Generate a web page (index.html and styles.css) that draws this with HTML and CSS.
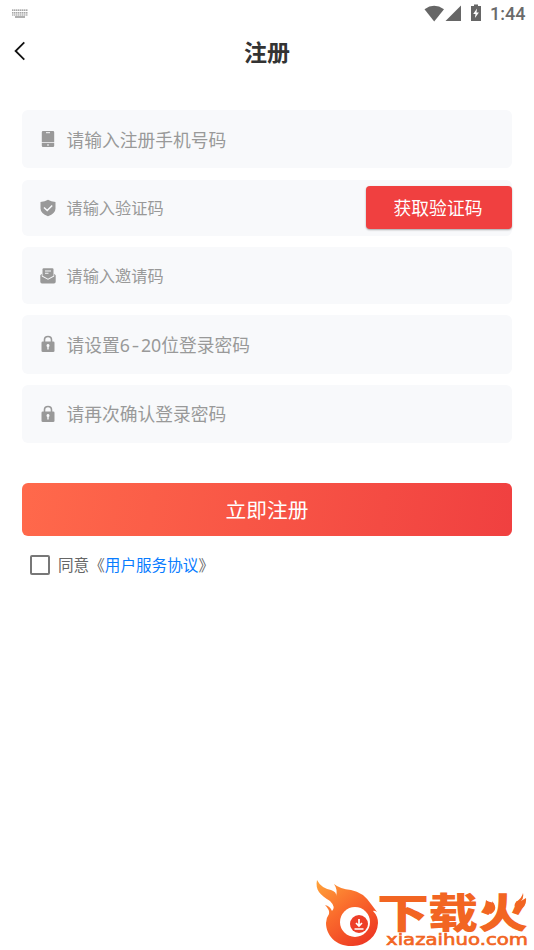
FILE: index.html
```html
<!DOCTYPE html>
<html lang="zh-CN">
<head>
<meta charset="utf-8">
<title>注册</title>
<link rel="stylesheet" href="styles.css">
</head>
<body>
<header class="status">
  <svg class="keyboard" width="16" height="10" viewBox="0 0 16 10"><path d="M0 1.200h16M0 3.800h16M0 6h16" stroke="#8b8b8b" stroke-width="1.200" stroke-dasharray="1.500 .5"/><path d="M3 8h10" stroke="#858585" stroke-width="1.300"/></svg>
  <div class="status-right">
    <svg width="61" height="18" viewBox="0 0 61 18" fill="#666"><path d="M.5 5.200Q10 -1.700 20 5.200L10.200 17.500Z"/><path d="M37 1.500V17H21.500Z"/><path d="M47 2h3V.5h4V2h3v15H47Z"/><path d="M53 4.500l-3.800 5.600h2.300l-.6 4 4-5.700h-2.400Z" fill="#fff"/></svg>
    <span class="clock">1:44</span>
  </div>
</header>
<nav class="nav">
  <svg class="back" width="12" height="20" viewBox="0 0 12 20"><path d="M10.300 1.400L1.600 10l8.700 8.600" fill="none" stroke="#111" stroke-width="1.800"/></svg>
  <h1>注册</h1>
</nav>
<main class="form">
  <div class="field tall">
    <svg class="icon" viewBox="0 0 16 18" fill="#999"><path d="M3 1h10q1.200 0 1.200 1.200v10.100H1.800V2.200Q1.800 1 3 1ZM1.800 12.900h12.400v2.900q0 1.200-1.200 1.200H3q-1.200 0-1.200-1.200Z"/><path d="M6 2.700h4M7 15h2" stroke="#f8f9fb" stroke-width="1"/></svg>
    <span class="hint large">请输入注册手机号码</span>
  </div>
  <div class="field code">
    <svg class="icon" viewBox="0 0 16 18" fill="#999"><path d="M8 .7Q11 2.800 15.500 3v6.500q0 4.800-7.500 7.800Q.5 14.300.5 9.500V3Q5 2.800 8 .7Z"/><path d="M4 8.500l3.200 3 5-5" fill="none" stroke="#f8f9fb" stroke-width="1.500"/></svg>
    <span class="hint">请输入验证码</span>
    <button class="get-code"><span>获取验证码</span></button>
  </div>
  <div class="field invite">
    <svg class="icon" viewBox="0 0 16 18" fill="#999"><path d="M3.700 1.200h8.600q1.200 0 1.200 1.200v6.400L8 11.700 2.500 8.800V2.400q0-1.200 1.200-1.200Z"/><path d="M1.800 6.800v2.700L8 12.700l6.200-3.200V6.800l1.500 1.500v6.500q0 1.700-1.700 1.700H2Q.3 16.500.3 14.800V8.300Z"/><path d="M5 4h6M5 6.300h3.500" stroke="#f8f9fb" stroke-width="1.100"/></svg>
    <span class="hint">请输入邀请码</span>
  </div>
  <div class="field password">
    <svg class="icon" viewBox="0 0 16 18"><path d="M4.500 7V4.800q0-3.300 3.500-3.300t3.500 3.300V7" fill="none" stroke="#999" stroke-width="1.600"/><rect x="1.500" y="6.500" width="13" height="10.500" rx="1.300" fill="#999"/><path d="M8 9a1.600 1.600 0 0 1 .7 3v2.500H7.300V12A1.600 1.600 0 0 1 8 9Z" fill="#f8f9fb"/></svg>
    <span class="hint large">请设置6<span class="dash">-</span>20位登录密码</span>
  </div>
  <div class="field password">
    <svg class="icon" viewBox="0 0 16 18"><path d="M4.500 7V4.800q0-3.300 3.500-3.300t3.500 3.300V7" fill="none" stroke="#999" stroke-width="1.600"/><rect x="1.500" y="6.500" width="13" height="10.500" rx="1.300" fill="#999"/><path d="M8 9a1.600 1.600 0 0 1 .7 3v2.500H7.300V12A1.600 1.600 0 0 1 8 9Z" fill="#f8f9fb"/></svg>
    <span class="hint large last">请再次确认登录密码</span>
  </div>
  <button class="submit"><span>立即注册</span></button>
  <label class="agree"><span class="box"></span><span class="terms">同意《<a>用户服务协议</a><span class="close">》</span></span></label>
</main>
<svg class="brand" width="224" height="80" viewBox="0 0 224 80">
  <defs><linearGradient id="flame" x1="0" y1="0" x2=".7" y2="1"><stop offset="0" stop-color="#ffa43a"/><stop offset=".5" stop-color="#fa6b2c"/><stop offset="1" stop-color="#ee3b24"/></linearGradient></defs>
  <path d="M7 10Q11 18 21 20Q27 22 26 26Q28 20 24 14Q30 19 41 20Q53 22 61 34Q64 38 67 42Q64 40 63 41Q68 46 68 53A25 24 0 0 1 43 76C27 77 16 66 16 53Q16 48 19 44Q20 40 15 35Q20 36 22 41Q26 37 20 31C10 25 5 20 7 10Z" fill="url(#flame)"/>
  <circle cx="45" cy="52" r="15" fill="#fff"/><circle cx="49" cy="54" r="9" fill="#ed3e28"/>
  <path d="M49 49v6M46 53l3 3 3-3M44.500 59h9" fill="none" stroke="#fff" stroke-width="1.700"/>
  <g class="brand-name"><text x="67" y="57.500" textLength="52" lengthAdjust="spacingAndGlyphs">下</text><text x="118" y="57.500" textLength="50" lengthAdjust="spacingAndGlyphs">载</text><text x="168" y="57.500" textLength="50" lengthAdjust="spacingAndGlyphs">火</text></g>
  <path d="M176 30Q182 34 180 39Q183 36 182 31Q189 39 181 44Q174 43 176 30ZM213 23Q214 28 211 31L216 28Q217 37 209 40Q202 37 206 32Q212 28 213 23Z" fill="#f26522"/>
  <text class="domain" x="76" y="75" textLength="142" lengthAdjust="spacingAndGlyphs">xiazaihuo.com</text>
</svg>
</body>
</html>
```
FILE: styles.css
```css
* { box-sizing: border-box; }
body { margin: 0; width: 534px; height: 950px; overflow: hidden; position: relative; background: #fff; font-family: "Noto Sans CJK SC", sans-serif; }
.status { height: 28px; padding: 0 9px 0 12px; display: flex; align-items: center; justify-content: space-between; }
.keyboard { display: block; }
.status-right { display: flex; align-items: center; gap: 5px; }
.status-right svg { position: relative; top: -1px; }
.clock { width: 35px; font: 500 18px/28px Roboto, sans-serif; color: #6a6a6a; }
.nav { height: 48px; display: grid; grid-template-columns: 1fr auto 1fr; align-items: center; padding: 0 14px; }
.back { display: block; transform: translateY(-1px); }
h1 { grid-column: 2; margin: 0; font-size: 23px; line-height: 32px; font-weight: 700; color: #333; transform: translateY(-1px); }
.form { padding: 34px 22px 0; display: flex; flex-direction: column; }
.field { height: 58.500px; margin-bottom: 11px; padding-left: 18px; display: flex; align-items: center; background: #f8f9fb; border-radius: 6px; color: #999; }
.tall { height: 58px; margin-bottom: 12px; }
.code { height: 56px; }
.invite { height: 57px; }
.icon { width: 16px; height: 18px; margin-right: 10.500px; flex: none; }
.hint { font-family: "Noto Sans CJK SC", sans-serif; font-size: 16.200px; line-height: 24px; transform: translateY(-1px); }
.large { font-family: "Noto Sans", "Noto Sans CJK SC", sans-serif; font-size: 17.750px; transform: translateY(1px); }
.last { transform: none; }
.dash { display: inline-block; width: 11px; text-align: center; transform: scaleX(1.300); }
button { border: 0; padding: 0; font-family: inherit; color: #fff; }
button span { display: block; transform: translateY(-1px); }
.get-code { width: 146px; height: 43px; margin: 0 0 1px auto; background: #f04040; border-radius: 4px; box-shadow: 0 1px 2px #0005; font-size: 17.800px; }
.get-code span { transform: translate(-1px, -1px); }
.submit { height: 53px; margin-top: 29px; background: linear-gradient(100deg, #ff694b, #f04040); border-radius: 6px; font-size: 20.700px; }
.agree { margin: 17px 0 0 8px; display: flex; align-items: center; gap: 8px; color: #666; font-size: 15.600px; line-height: 24px; }
.terms { transform: translateY(-1px); }
.box { width: 20px; height: 20px; border: 2px solid #777; border-radius: 2px; }
.agree a { color: #087cff; }
.brand { position: absolute; right: 0; bottom: 0; }
.brand-name { font: 900 41px "Noto Sans CJK SC", sans-serif; fill: #f26522; }
.domain { font: 400 15px "DejaVu Sans", sans-serif; fill: #f26522; stroke: #f26522; stroke-width: .6px; }
```
